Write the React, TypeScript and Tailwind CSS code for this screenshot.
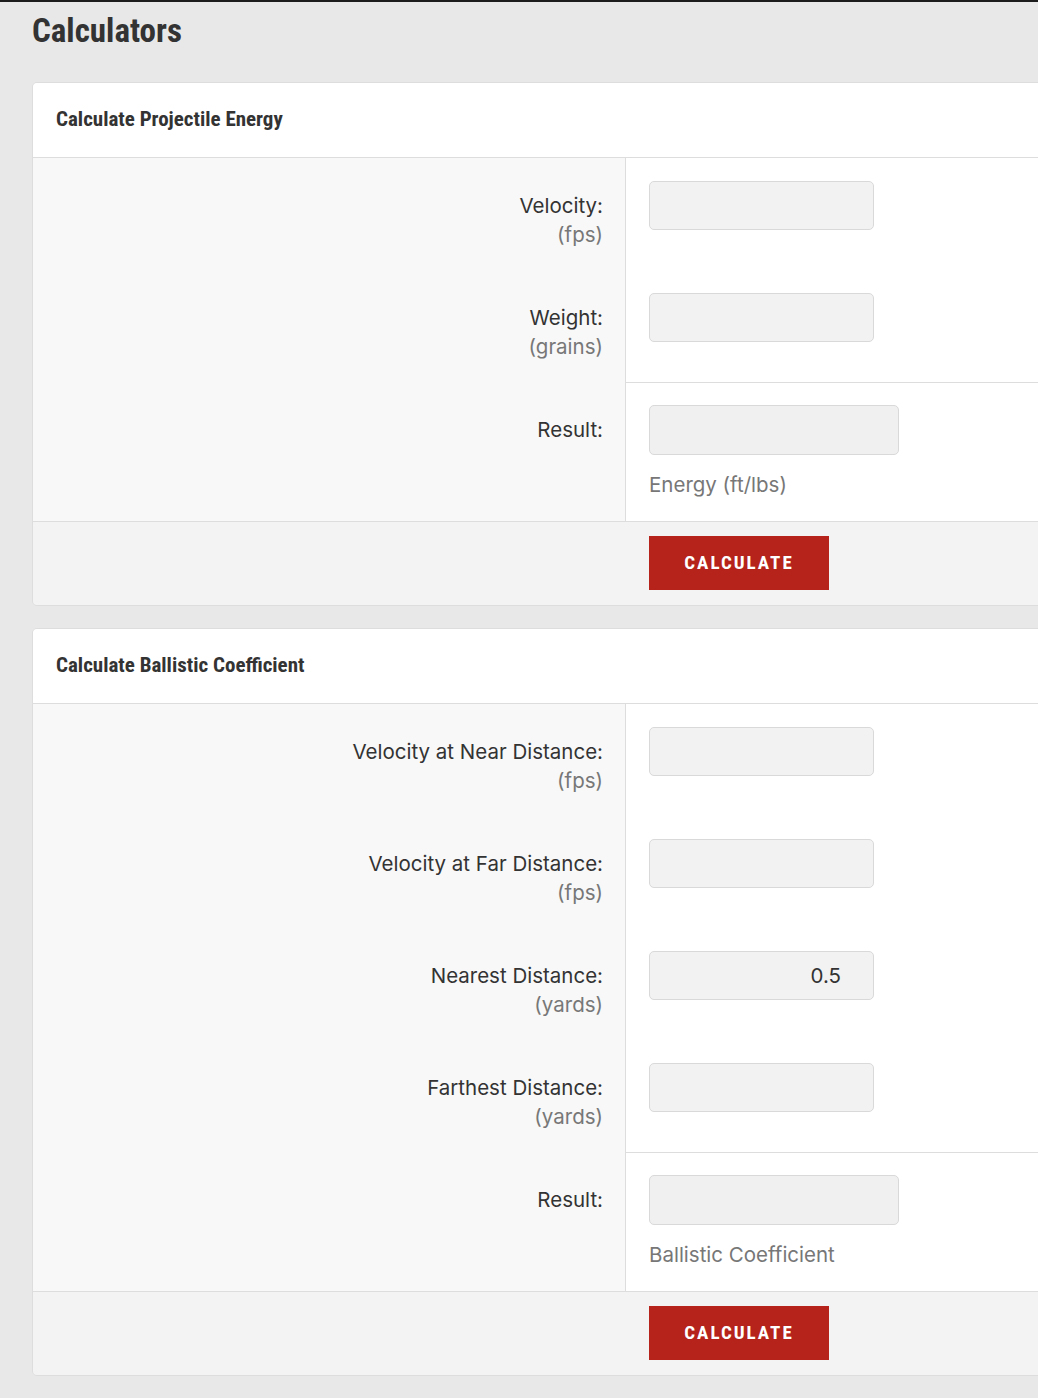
const heading = {
  fontFamily: '"Roboto Condensed", "Liberation Sans Narrow", "DejaVu Sans Condensed", sans-serif',
};

type Field = { label: string; unit: string; value?: string };

const Row = ({ label, unit, value }: Field) => (
  <div className="flex h-[112px]">
    <div className="w-[593px] shrink-0 border-r border-[#dddddd] bg-[#f8f8f8] pr-[22px] pt-[33px] text-right">
      <div className="text-[20.5px] leading-[29px] text-[#333333]">{label}</div>
      <div className="text-[20.5px] leading-[29px] text-[#777777]">{unit}</div>
    </div>
    <div className="flex-1 bg-white pl-[23px] pt-[23px]">
      <input
        type="text"
        defaultValue={value}
        className="h-[49px] w-[225px] rounded-[5px] border border-[#d9d9d9] bg-[#f2f2f2] pr-[32px] text-right text-[20.5px] text-[#333333] outline-none"
      />
    </div>
  </div>
);

const Calculator = ({ title, fields, resultNote }: { title: string; fields: Field[]; resultNote: string }) => (
  <div className="w-[1100px] overflow-hidden rounded-[5px] border border-[#dddddd]">
    <div className="flex h-[75px] items-center border-b border-[#dddddd] bg-white pl-[23px]">
      <h2 className="text-[21px] font-bold text-[#333333]" style={heading}>
        {title}
      </h2>
    </div>
    {fields.map((f) => (
      <Row key={f.label} {...f} />
    ))}
    <div className="flex h-[139px]">
      <div className="w-[593px] shrink-0 border-r border-[#dddddd] bg-[#f8f8f8] pr-[22px] pt-[33px] text-right">
        <div className="text-[20.5px] leading-[29px] text-[#333333]">Result:</div>
      </div>
      <div className="flex-1 border-t border-[#dddddd] bg-white pl-[23px] pt-[22px]">
        <input
          type="text"
          readOnly
          className="block h-[50px] w-[250px] rounded-[5px] border border-[#d9d9d9] bg-[#f0f0f0] outline-none"
        />
        <div className="mt-[15px] text-[20.5px] leading-[29px] text-[#777777]">{resultNote}</div>
      </div>
    </div>
    <div className="border-t border-[#dddddd] bg-[#f3f3f3] pb-[15px] pl-[616px] pt-[14px]">
      <button
        className="h-[54px] w-[180px] bg-[#b5231a] text-[19px] font-bold tracking-[2px] text-white"
        style={heading}
      >
        CALCULATE
      </button>
    </div>
  </div>
);

export default function App() {
  return (
    <div
      className="min-h-[1398px] w-full overflow-hidden border-t-2 border-[#1c1c1c] bg-[#e8e8e8] pl-[32px]"
      style={{ fontFamily: 'Inter, "Noto Sans", sans-serif' }}
    >
      <h1 className="pt-[10px] text-[33px] font-bold leading-[38px] text-[#333333]" style={heading}>
        Calculators
      </h1>
      <div className="mt-[32px] flex flex-col gap-[22px]">
        <Calculator
          title="Calculate Projectile Energy"
          fields={[
            { label: "Velocity:", unit: "(fps)" },
            { label: "Weight:", unit: "(grains)" },
          ]}
          resultNote="Energy (ft/lbs)"
        />
        <Calculator
          title="Calculate Ballistic Coefficient"
          fields={[
            { label: "Velocity at Near Distance:", unit: "(fps)" },
            { label: "Velocity at Far Distance:", unit: "(fps)" },
            { label: "Nearest Distance:", unit: "(yards)", value: "0.5" },
            { label: "Farthest Distance:", unit: "(yards)" },
          ]}
          resultNote="Ballistic Coefficient"
        />
      </div>
    </div>
  );
}
